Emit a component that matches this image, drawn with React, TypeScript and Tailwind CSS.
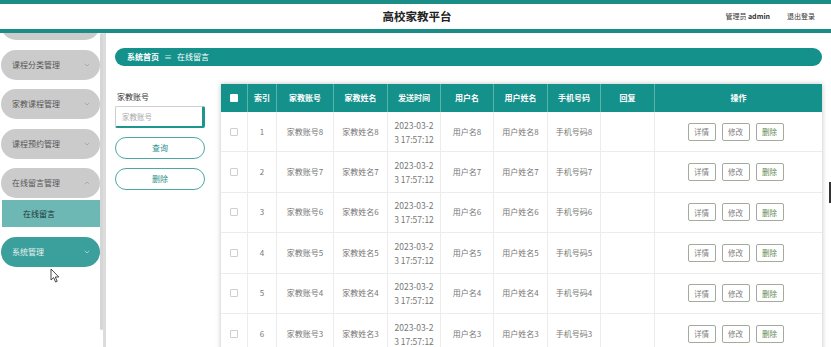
import React from "react";
import { ChevronDown, ChevronUp } from "lucide-react";

const font = { fontFamily: '"Noto Sans CJK SC", "Noto Sans", sans-serif' };

const rows = [
  { i: 1, n: 8 },
  { i: 2, n: 7 },
  { i: 3, n: 6 },
  { i: 4, n: 5 },
  { i: 5, n: 4 },
  { i: 6, n: 3 },
];

const cols = ["w-[27px]", "w-[29px]", "w-[57px]", "w-[54px]", "w-[53px]", "w-[53px]", "w-[54px]", "w-[53px]", "w-[54px]", "w-[167px]"];
const heads = ["", "索引", "家教账号", "家教姓名", "发送时间", "用户名", "用户姓名", "手机号码", "回复", "操作"];

function Pill({ label, up, active }: { label: string; up?: boolean; active?: boolean }) {
  return (
    <div
      className={`ml-[1px] w-[99px] h-[30px] rounded-full flex items-center justify-between pl-[11px] pr-[9px] text-[8px] ${
        active ? "bg-[#3b9f9b] text-[#e3f2f1]" : "bg-[#cbcbcb] text-[#555]"
      }`}
    >
      <span>{label}</span>
      {up ? (
        <ChevronUp size={8} color={active ? "#cfe8e6" : "#9a9a9a"} />
      ) : (
        <ChevronDown size={8} color={active ? "#cfe8e6" : "#9a9a9a"} />
      )}
    </div>
  );
}

function ActBtn({ label, green }: { label: string; green?: boolean }) {
  return (
    <div
      className={`w-[28px] h-[18px] border border-[#a3ab9c] rounded-[2px] flex items-center justify-center text-[7.5px] ${
        green ? "text-[#5f8a4f]" : "text-[#808080]"
      }`}
    >
      {label}
    </div>
  );
}

export default function App() {
  return (
    <div className="relative w-[831px] h-[347px] overflow-hidden bg-white" style={font}>
      {/* header */}
      <div className="h-[33px] border-t-[4px] border-b-[4px] border-[#1a8d87] grid grid-cols-[1fr_auto_1fr] items-center bg-white">
        <div />
        <div className="text-[11.5px] font-bold text-[#222] pl-[3px]">高校家教平台</div>
        <div className="flex justify-end items-center gap-[17px] pr-[16px] text-[7px] text-[#333]">
          <span>
            管理员 <span className="font-bold">admin</span>
          </span>
          <span>退出登录</span>
        </div>
      </div>

      <div className="flex h-[314px]">
        {/* sidebar */}
        <div className="w-[103px] flex overflow-hidden">
          <div className="w-[100px] flex flex-col mt-[-23px]">
            <div className="mb-[10px] ml-[1px] w-[99px] h-[30px] rounded-full bg-[#cbcbcb]" />
            <div className="mb-[9px]">
              <Pill label="课程分类管理" />
            </div>
            <div className="mb-[10px]">
              <Pill label="家教课程管理" />
            </div>
            <div className="mb-[9px]">
              <Pill label="课程预约管理" />
            </div>
            <Pill label="在线留言管理" up />
            <div className="mt-[2px] ml-[2px] w-[99px] h-[27px] bg-[#6db8b5] flex items-center pl-[21px] text-[8px] text-[#1c3535]">
              在线留言
            </div>
            <div className="mt-[10px]">
              <Pill label="系统管理" active />
            </div>
          </div>
          <div className="w-[3px] flex flex-col">
            <div className="h-[297px] bg-[#d6d6d6] rounded-full" />
          </div>
        </div>
        <div className="w-[3px] bg-[#dcdcdc]" />

        {/* main */}
        <div className="flex-1 pl-[9px] pr-[9px]">
          <div className="mt-[15px] h-[18px] rounded-full bg-[#15918b] flex items-center pl-[12px] text-[8px] text-white gap-[5px]">
            <span className="font-bold">系统首页</span>
            <span className="text-[#cfe9e7]">≡</span>
            <span>在线留言</span>
          </div>

          <div className="flex mt-[18px] gap-[16px]">
            {/* search */}
            <div className="w-[90px] flex flex-col pt-[7px]">
              <div className="text-[8px] text-[#333] leading-[12px] pl-[2px]">家教账号</div>
              <div className="mt-[3px] h-[22px] border border-[#cfcfcf] border-r-[3px] border-r-[#1f958f] border-b-[2px] border-b-[#1f958f] rounded-[2px] flex items-center pl-[6px] text-[7.5px] text-[#aaa]">
                家教账号
              </div>
              <div className="mt-[9px] h-[22px] rounded-full border border-[#4ba8a3] flex items-center justify-center text-[8px] text-[#2a8f8a]">
                查询
              </div>
              <div className="mt-[9px] h-[22px] rounded-full border border-[#4ba8a3] flex items-center justify-center text-[8px] text-[#2a8f8a]">
                删除
              </div>
            </div>

            {/* table */}
            <div className="w-[601px] shadow-[0_0_5px_rgba(0,0,0,0.25)] bg-white">
              <div className="flex h-[28px] bg-[#15918b] text-white text-[8px] font-bold">
                {heads.map((h, k) => (
                  <div
                    key={k}
                    className={`${cols[k]} flex items-center justify-center ${k < 9 ? "border-r border-[#5bb3ae]" : ""}`}
                  >
                    {k === 0 ? <div className="w-[8px] h-[8px] bg-white rounded-[1px]" /> : h}
                  </div>
                ))}
              </div>
              {rows.map((r) => (
                <div key={r.i} className="flex h-[40.4px] border-b border-[#ececec] text-[8px] text-[#777]">
                  <div className={`${cols[0]} flex items-center justify-center border-r border-[#ececec]`}>
                    <div className="w-[8px] h-[8px] border border-[#cfcfcf] rounded-[1px]" />
                  </div>
                  <div className={`${cols[1]} flex items-center justify-center border-r border-[#ececec]`}>{r.i}</div>
                  <div className={`${cols[2]} flex items-center justify-center border-r border-[#ececec]`}>家教账号{r.n}</div>
                  <div className={`${cols[3]} flex items-center justify-center border-r border-[#ececec]`}>家教姓名{r.n}</div>
                  <div className={`${cols[4]} flex flex-col items-center justify-center border-r border-[#ececec] leading-[14px] text-[8.5px]`}>
                    <span>2023-03-2</span>
                    <span>3 17:57:12</span>
                  </div>
                  <div className={`${cols[5]} flex items-center justify-center border-r border-[#ececec]`}>用户名{r.n}</div>
                  <div className={`${cols[6]} flex items-center justify-center border-r border-[#ececec]`}>用户姓名{r.n}</div>
                  <div className={`${cols[7]} flex items-center justify-center border-r border-[#ececec]`}>手机号码{r.n}</div>
                  <div className={`${cols[8]} border-r border-[#ececec]`} />
                  <div className={`${cols[9]} flex items-center justify-center gap-[6px] pr-[6px]`}>
                    <ActBtn label="详情" />
                    <ActBtn label="修改" />
                    <ActBtn label="删除" green />
                  </div>
                </div>
              ))}
            </div>
          </div>
        </div>
      </div>

      {/* mouse cursor overlay */}
      <svg className="absolute left-[50px] top-[268px]" width="10" height="15" viewBox="0 0 10 15">
        <path d="M1 1 L1 12 L3.6 9.6 L5.6 14 L7.2 13.3 L5.3 9 L8.8 9 Z" fill="white" stroke="#333" strokeWidth="0.9" strokeLinejoin="round" />
      </svg>
      {/* right-edge mark */}
      <div className="absolute right-0 top-[182px] w-[2px] h-[21px] bg-[#333]" />
    </div>
  );
}
